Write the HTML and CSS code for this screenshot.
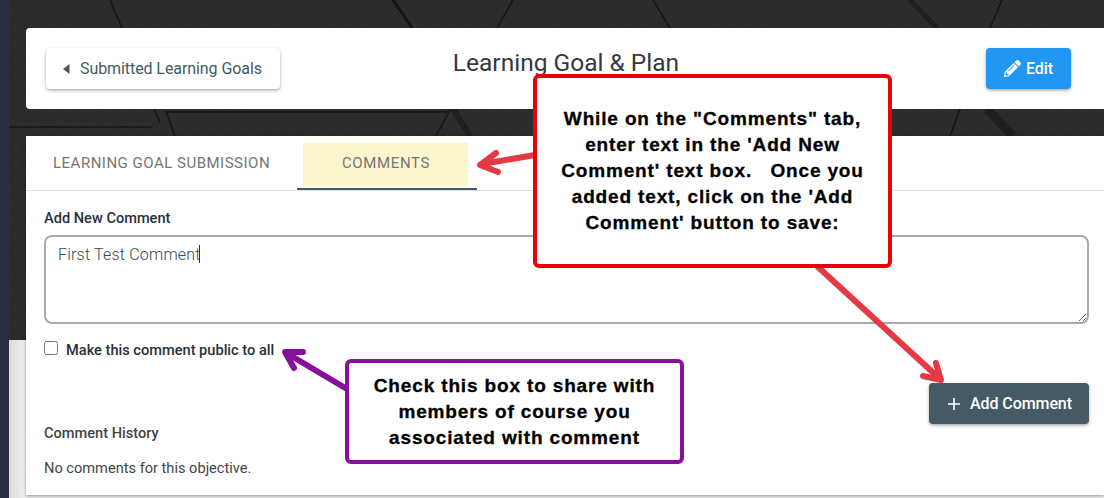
FILE: index.html
```html
<!DOCTYPE html>
<html lang="en">
<head>
  <meta charset="UTF-8">
  <meta name="viewport" content="width=device-width, initial-scale=1.0">
  <title>Learning Goal &amp; Plan</title>
  <link rel="stylesheet" href="styles.css">
</head>
<body>
  <div class="sidebar"></div>

  <div class="main">
    <!-- dark textured banner behind the cards -->
    <div class="banner">
      <svg class="banner-lines" width="1095" height="340" viewBox="9 0 1095 340" fill="none">
        <g stroke="#141414">
          <path d="M110 0 122 28" stroke-width="1.5"/>
          <path d="M393 0 412 28" stroke-width="3"/>
          <path d="M513 0 497 28" stroke-width="1.5"/>
          <path d="M653 0 670 28" stroke-width="1.5"/>
          <path d="M910 0 937 28" stroke-width="5" stroke="#1f1f1f"/>
          <path d="M1002 0 990 28" stroke-width="1.5"/>
          <path d="M9 127H152" stroke-width="1.5"/>
          <path d="M154 109 160 122" stroke-width="1.5"/>
          <path d="M166 111 175 136" stroke-width="1.5"/>
          <path d="M166 112H447" stroke-width="1.5"/>
          <path d="M450 110 436 136" stroke-width="1.5"/>
          <path d="M453 109 470 136" stroke-width="6" stroke="#1f1f1f"/>
          <path d="M960 109 950 136" stroke-width="1.5"/>
          <path d="M987 109 1013 136" stroke-width="9" stroke="#1f1f1f"/>
        </g>
      </svg>
    </div>

    <header class="card page-head">
      <a class="btn btn-back" href="#">
        <svg class="back-icon" width="7" height="10" viewBox="0 0 7 10"><path d="M6.5 0v10L0 5z"/></svg>
        Submitted Learning Goals
      </a>
      <h1>Learning Goal &amp; Plan</h1>
      <a class="btn btn-edit" href="#">
        <svg width="17" height="17" viewBox="0 0 512 512"><path d="M497.9 142.1l-46.1 46.1c-4.7 4.7-12.3 4.7-17 0l-111-111c-4.7-4.7-4.7-12.3 0-17l46.1-46.1c18.7-18.7 49.1-18.7 67.9 0l60.1 60.1c18.8 18.7 18.8 49.1 0 67.9zM284.2 99.8L21.6 362.4.4 483.9c-2.9 16.4 11.4 30.6 27.8 27.8l121.5-21.3 262.6-262.6c4.7-4.7 4.7-12.3 0-17l-111-111c-4.8-4.7-12.4-4.7-17.1 0zM124.1 339.9c-5.5-5.5-5.5-14.3 0-19.8l154-154c5.5-5.5 14.3-5.5 19.8 0s5.5 14.3 0 19.8l-154 154c-5.5 5.5-14.3 5.5-19.8 0zM88 424h48v36.3l-64.5 11.3-31.1-31.1L51.7 376H88v48z"/></svg>
        Edit
      </a>
    </header>

    <section class="card panel">
      <nav class="tabs">
        <a class="tab" href="#">Learning Goal Submission</a>
        <a class="tab tab-active" href="#"><span>Comments</span></a>
      </nav>

      <div class="panel-body">
        <label class="field-label" for="new-comment">Add New Comment</label>
        <div class="comment-wrap">
          <textarea class="comment-box" id="new-comment">First Test Comment</textarea>
          <span class="caret"></span>
        </div>

        <div class="public-row">
          <input type="checkbox" id="public">
          <label for="public">Make this comment public to all</label>
        </div>

        <div class="actions">
          <a class="btn btn-add" href="#">
            <svg width="14" height="14" viewBox="0 0 14 14"><path d="M7 1v12M1 7h12"/></svg>
            Add Comment
          </a>
        </div>

        <h2>Comment History</h2>
        <p class="empty">No comments for this objective.</p>
      </div>
    </section>
  </div>

  <!-- annotations drawn on top of the screenshot -->
  <svg class="arrows" width="1104" height="498" viewBox="0 0 1104 498" fill="none" stroke-width="6" stroke-linecap="round" stroke-linejoin="round">
    <g stroke="#e63946">
      <path d="M535 155 482 164"/>
      <path d="M496 153 480 165 498 172"/>
      <path d="M818 267 939 378"/>
      <path d="M923 376 941 380 936 363"/>
    </g>
    <g stroke="#860f9c">
      <path d="M347 389 288 354"/>
      <path d="M303 352 285 352 294 368"/>
    </g>
  </svg>

  <div class="note note-red">
    While on the "Comments" tab,<br>
    enter text in the 'Add New<br>
    Comment' text box. &nbsp; Once you<br>
    added text, click on the 'Add<br>
    Comment' button to save:
  </div>
  <div class="note note-purple">
    Check this box to share with<br>
    members of course you<br>
    associated with comment
  </div>
</body>
</html>
```

FILE: styles.css
```css
* {
  box-sizing: border-box;
}
body {
  font-family: Roboto, sans-serif;
  background-color: #f1f1f1;
  color: #263238;
  margin: 0;
  height: 498px;
  display: flex;
  overflow: hidden;
  position: relative;
}
a {
  text-decoration: none;
}
.sidebar {
  width: 9px;
  flex: none;
  background-color: #2b3040;
}
.main {
  flex: 1;
  min-width: 0;
  padding: 28px 0 3px 17px;
  display: flex;
  flex-direction: column;
  position: relative;
  background: linear-gradient(to right, #dcdcdc, #f1f1f1 17px);
}
.banner {
  position: absolute;
  top: 0;
  left: 0;
  right: 0;
  height: 340px;
  background-color: #2a2a2a;
  background-image: repeating-linear-gradient(135deg, rgba(255, 255, 255, 0.025) 0, rgba(255, 255, 255, 0.025) 1px, transparent 1px, transparent 3px);
}
.banner-lines {
  display: block;
}
.card {
  background-color: white;
  position: relative;
}
.page-head {
  height: 81px;
  flex: none;
  border-radius: 4px 0 0 4px;
  padding: 20px 18px 0 20px;
  display: grid;
  grid-template-columns: 1fr auto 1fr;
  align-items: start;
}
.page-head h1 {
  margin: 1px 0 0;
  font-size: 24.5px;
  font-weight: 400;
  line-height: 28px;
  color: #37393b;
}
.btn {
  height: 41px;
  border-radius: 4px;
  display: inline-flex;
  align-items: center;
  font-size: 16px;
  font-weight: 500;
  letter-spacing: -0.08px;
  box-shadow: 0 2px 4px -1px rgba(0, 0, 0, 0.25), 0 1px 3px rgba(0, 0, 0, 0.2);
}
.btn-back {
  justify-self: start;
  width: 234px;
  padding-left: 17px;
  gap: 10px;
  font-weight: 400;
  color: #455a64;
  background-color: white;
}
.back-icon {
  fill: #455a64;
}
.btn-edit {
  justify-self: end;
  width: 85px;
  margin-right: 15px;
  justify-content: center;
  gap: 5px;
  color: white;
  background-color: #2196f3;
}
.btn-edit svg {
  fill: white;
}
.panel {
  margin-top: 27px;
  flex: 1;
  box-shadow: 0 1px 3px rgba(0, 0, 0, 0.4);
}
.tabs {
  height: 55px;
  padding-left: 7px;
  display: flex;
  border-bottom: 1px solid #e0e0e0;
}
.tab {
  height: 54px;
  padding: 7px 20px 0;
  line-height: 40px;
  font-size: 15px;
  letter-spacing: 0.5px;
  text-transform: uppercase;
  color: #757575;
}
.tab:first-child {
  width: 264px;
}
.tab-active {
  width: 180px;
  padding: 7px 9px 0 6px;
  border-bottom: 2px solid #455a64;
}
.tab-active span {
  display: block;
  height: 44px;
  padding-left: 1px;
  line-height: 40px;
  letter-spacing: 0.65px;
  text-align: center;
  background-color: #fcf6ce;
}
.panel-body {
  padding: 19px 15px 0 18px;
}
.field-label {
  display: block;
  font-size: 14.6px;
  font-weight: 500;
  line-height: 17px;
  color: #263238;
}
.comment-wrap {
  margin-top: 8px;
  position: relative;
}
.comment-box {
  display: block;
  width: 100%;
  height: 89px;
  border: 2px solid #a9a9a9;
  border-radius: 8px;
  padding: 8px 12px;
  font-family: Roboto, sans-serif;
  font-size: 16px;
  font-weight: 300;
  line-height: 20px;
  letter-spacing: 0.2px;
  color: #37474f;
  outline: none;
}
.caret {
  position: absolute;
  left: 155px;
  top: 10px;
  width: 1px;
  height: 18px;
  background-color: #263238;
}
.public-row {
  margin-top: 16px;
  display: flex;
  align-items: flex-start;
  gap: 8px;
  font-size: 14.6px;
  font-weight: 500;
  line-height: 20px;
}
.public-row input {
  margin: 1px 0 0;
  width: 14px;
  height: 14px;
}
.actions {
  margin-top: 23px;
  display: flex;
  justify-content: flex-end;
}
.btn-add {
  width: 160px;
  padding-left: 18px;
  gap: 9px;
  color: white;
  background-color: #455a64;
}
.btn-add svg {
  stroke: white;
  stroke-width: 1.6;
}
.panel-body h2 {
  margin: 1px 0 0;
  font-size: 14.6px;
  font-weight: 500;
  line-height: 17px;
  color: #444;
}
.empty {
  margin: 18px 0 0;
  font-size: 14.6px;
  line-height: 17px;
  color: #444;
}
.arrows {
  position: absolute;
  top: 0;
  left: 0;
  pointer-events: none;
}
.note {
  position: absolute;
  background-color: white;
  border-radius: 6px;
  display: flex;
  align-items: center;
  justify-content: center;
  text-align: center;
  font-family: "Liberation Sans", Arial, sans-serif;
  font-weight: 700;
  font-size: 19px;
  line-height: 26px;
  letter-spacing: 0.85px;
  -webkit-text-stroke: 0.3px black;
  color: black;
}
.note-red {
  left: 533px;
  top: 74px;
  width: 359px;
  height: 194px;
  border: 4px solid #e8000b;
}
.note-purple {
  left: 345px;
  top: 359px;
  width: 339px;
  height: 105px;
  border: 4px solid #860f9c;
}
```
